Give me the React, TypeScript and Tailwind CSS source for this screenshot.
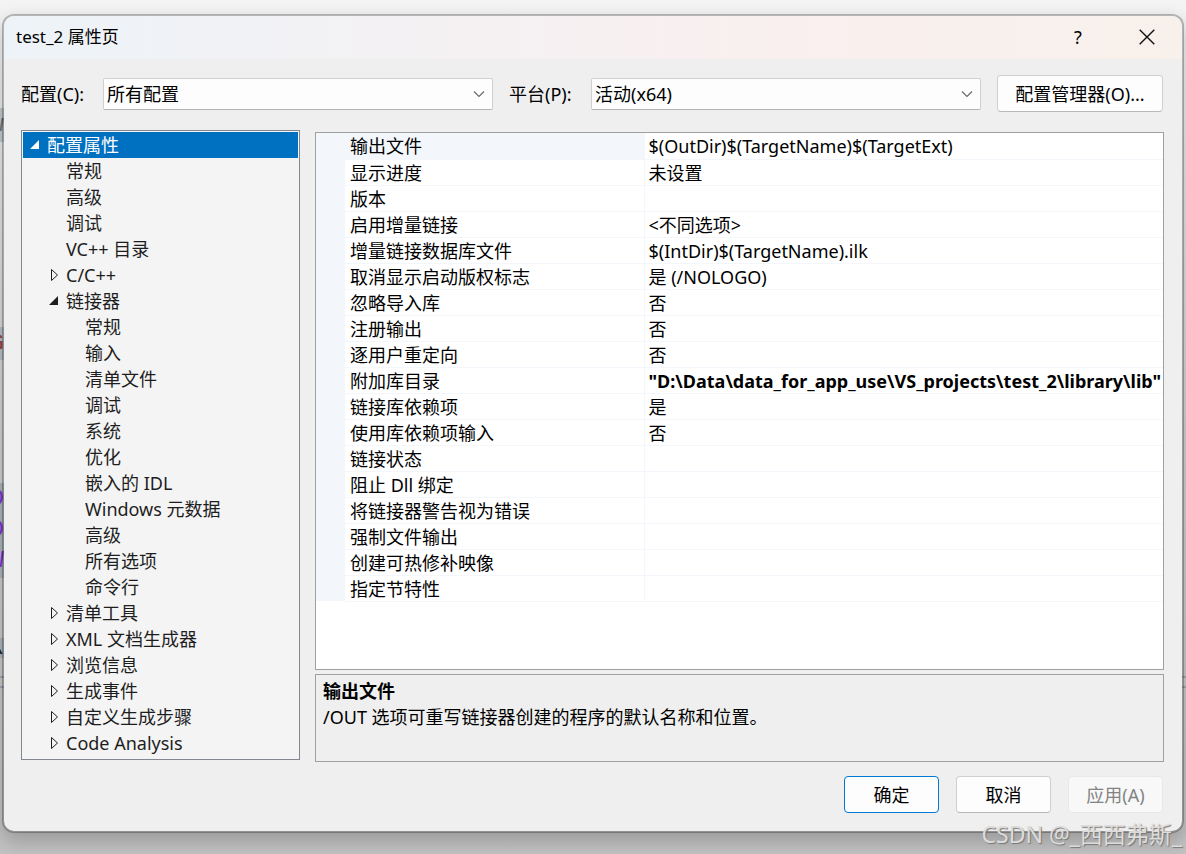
import { useState } from "react";

const FONT = "font-['Noto_Sans','Noto_Sans_CJK_SC',sans-serif]";

type Node = { label: string; level: number; state?: "open" | "closed" };

const tree: Node[] = [
  { label: "配置属性", level: 0, state: "open" },
  { label: "常规", level: 1 },
  { label: "高级", level: 1 },
  { label: "调试", level: 1 },
  { label: "VC++ 目录", level: 1 },
  { label: "C/C++", level: 1, state: "closed" },
  { label: "链接器", level: 1, state: "open" },
  { label: "常规", level: 2 },
  { label: "输入", level: 2 },
  { label: "清单文件", level: 2 },
  { label: "调试", level: 2 },
  { label: "系统", level: 2 },
  { label: "优化", level: 2 },
  { label: "嵌入的 IDL", level: 2 },
  { label: "Windows 元数据", level: 2 },
  { label: "高级", level: 2 },
  { label: "所有选项", level: 2 },
  { label: "命令行", level: 2 },
  { label: "清单工具", level: 1, state: "closed" },
  { label: "XML 文档生成器", level: 1, state: "closed" },
  { label: "浏览信息", level: 1, state: "closed" },
  { label: "生成事件", level: 1, state: "closed" },
  { label: "自定义生成步骤", level: 1, state: "closed" },
  { label: "Code Analysis", level: 1, state: "closed" },
];

const indent = ["pl-1", "pl-[23px]", "pl-[42px]"];

const rows: [string, string, boolean?][] = [
  ["输出文件", "$(OutDir)$(TargetName)$(TargetExt)"],
  ["显示进度", "未设置"],
  ["版本", ""],
  ["启用增量链接", "<不同选项>"],
  ["增量链接数据库文件", "$(IntDir)$(TargetName).ilk"],
  ["取消显示启动版权标志", "是 (/NOLOGO)"],
  ["忽略导入库", "否"],
  ["注册输出", "否"],
  ["逐用户重定向", "否"],
  ["附加库目录", '"D:\\Data\\data_for_app_use\\VS_projects\\test_2\\library\\lib"', true],
  ["链接库依赖项", "是"],
  ["使用库依赖项输入", "否"],
  ["链接状态", ""],
  ["阻止 Dll 绑定", ""],
  ["将链接器警告视为错误", ""],
  ["强制文件输出", ""],
  ["创建可热修补映像", ""],
  ["指定节特性", ""],
];

function Arrow({ state }: { state?: "open" | "closed" }) {
  return (
    <svg viewBox="0 0 16 16" className="h-4 w-4 shrink-0" aria-hidden="true">
      {state === "open" && <path d="M12 3v9H3z" fill="currentColor" />}
      {state === "closed" && <path d="M5.5 2.5v11l6-5.5z" fill="none" stroke="currentColor" />}
    </svg>
  );
}

function Combo({ id, label, value }: { id: string; label: string; value: string }) {
  return (
    <div className="flex min-w-0 flex-1 items-center">
      <label htmlFor={id} className="w-[82px] shrink-0">{label}</label>
      <div className="relative min-w-0 flex-1">
        <select id={id} defaultValue={value} className="block h-8 w-full appearance-none rounded-xs border border-[#d0d0d0] border-b-[#b4b4b4] bg-[#fdfdfd] pl-[3px] pr-8 text-black outline-none">
          <option>{value}</option>
        </select>
        <svg viewBox="0 0 12 8" className="pointer-events-none absolute right-2 top-3 h-2 w-3" fill="none" stroke="#666" strokeWidth="1.1" aria-hidden="true">
          <path d="M1 1.5l5 5 5-5" />
        </svg>
      </div>
    </div>
  );
}

/* Slivers of the code editor that stick out behind the dialog's edges. */
function EditorBehind() {
  return (
    <div aria-hidden="true" className="pointer-events-none absolute inset-0 font-['Liberation_Mono',monospace] text-[24px]">
      <div className="absolute left-0 top-[108px] flex h-[34px] w-1 items-center justify-end overflow-hidden bg-[#c3cace] text-[#777]">w</div>
      <div className="absolute left-0 top-[327px] flex h-[33px] w-1 items-center justify-end overflow-hidden bg-[#b9c0c4] text-[#a04040]">G</div>
      <div className="absolute left-0 top-[483px] h-[95px] w-1 overflow-hidden bg-[#adb6ba] leading-[31px] text-[#8430d8]">
        <div className="flex justify-end">D</div>
        <div className="flex justify-end">D</div>
        <div className="flex justify-end">W</div>
      </div>
      <div className="absolute left-0 top-[638px] flex h-5 w-1 items-center justify-end overflow-hidden bg-[#aeb5b9] text-[#222]">\</div>
      <div className="absolute inset-x-0 top-[676px] h-3 border-y-2 border-[#a5a5b5]" />
    </div>
  );
}

export default function App() {
  const [selected, setSelected] = useState(0);
  return (
    <div className={`relative min-h-screen overflow-hidden bg-linear-to-b from-[#f4f4f4] via-[#d2d2d2] to-[#c2c2c2] px-[2px] pt-[14px] pb-[21px] text-[18px] leading-[26px] text-black ${FONT}`}>
      <EditorBehind />
      <main className="relative flex min-h-[819px] flex-col overflow-hidden rounded-xl border-2 border-black/25 bg-[#efefef] bg-clip-padding shadow-[0_8px_20px_rgba(0,0,0,0.22)]">
        <header className="flex h-[43px] items-center justify-between bg-linear-to-r from-[#edf3f8] from-0% via-[#f9efef] via-65% to-[#f8f1eb] pl-3 pr-[27px] pb-[2px]">
          <h1 className="text-[17px]">test_2 属性页</h1>
          <div className="flex items-center gap-[55px]">
            <button aria-label="帮助" className="w-3">?</button>
            <button aria-label="关闭">
              <svg viewBox="0 0 16 16" className="h-4 w-4" fill="none" stroke="#111" strokeWidth="1.4" aria-hidden="true">
                <path d="M.7.7l14.6 14.6M15.3.7L.7 15.3" />
              </svg>
            </button>
          </div>
        </header>

        <div className="flex pt-4 pl-[17px] pr-[19px]">
          <div className="flex min-w-0 flex-1 items-center gap-4 pr-4">
            <Combo id="config" label="配置(C):" value="所有配置" />
            <Combo id="platform" label="平台(P):" value="活动(x64)" />
          </div>
          <button className="h-[37px] w-[166px] shrink-0 rounded-sm border border-[#d0d0d0] border-b-[#b8b8b8] bg-[#fdfdfd]">配置管理器(O)...</button>
        </div>

        <div className="flex gap-[15px] pt-[18px] pl-[17px] pr-[18px]">
          <ul className="h-[630px] w-[279px] shrink-0 border border-[#828790] bg-[#f4f4f4] p-px text-[#1e1e1e]">
            {tree.map((n, i) => (
              <li key={i}>
                <button
                  onClick={() => setSelected(i)}
                  className={`flex h-[26px] w-full items-center gap-1 text-left ${indent[n.level]} ${selected === i ? "bg-[#0070c0] text-white" : ""}`}
                >
                  <Arrow state={n.state} />
                  <span>{n.label}</span>
                </button>
              </li>
            ))}
          </ul>

          <div className="flex min-w-0 flex-1 flex-col gap-1 pt-0.5">
            <div className="h-[538px] overflow-hidden border border-[#a0a0a0] bg-white">
              <table className="w-full table-fixed border-collapse">
                <colgroup>
                  <col className="w-[29px]" />
                  <col className="w-[299px]" />
                  <col />
                </colgroup>
                <tbody>
                  {rows.map(([name, value, bold], i) => (
                    <tr key={name} className="h-[26px]">
                      <td className="bg-[#f3f7fc] p-0" />
                      <th scope="row" className={`border-r border-b border-[#f3f7fc] p-0 pt-px pl-[5px] text-left font-normal leading-6 ${i === 0 ? "bg-[#f3f7fc]" : ""}`}>{name}</th>
                      <td className={`overflow-hidden border-b border-[#f3f7fc] p-0 pt-px pl-1 leading-6 whitespace-nowrap ${bold ? "font-bold" : ""}`}>{value}</td>
                    </tr>
                  ))}
                </tbody>
              </table>
            </div>
            <section className="h-[88px] border border-[#a0a0a0] px-[7px] pt-[3px]">
              <h2 className="font-bold">输出文件</h2>
              <p>/OUT 选项可重写链接器创建的程序的默认名称和位置。</p>
            </section>
          </div>
        </div>

        <footer className="flex justify-end gap-[17px] pt-[14px] pr-[19px]">
          <button className="h-[37px] w-[95px] rounded-sm border border-[#0078d4] bg-[#fdfdfd]">确定</button>
          <button className="h-[37px] w-[95px] rounded-sm border border-[#d0d0d0] border-b-[#b8b8b8] bg-[#fdfdfd]">取消</button>
          <button disabled className="h-[37px] w-[95px] rounded-sm border border-[#e8e8e8] bg-[#f8f8f8] text-[#838383]">应用(A)</button>
        </footer>
      </main>
      <div className="pointer-events-none absolute right-1 bottom-0.5 text-[23px] leading-9 text-[#dcdcdc] [text-shadow:1px_1px_1px_#777]">CSDN @_西西弗斯_</div>
    </div>
  );
}
